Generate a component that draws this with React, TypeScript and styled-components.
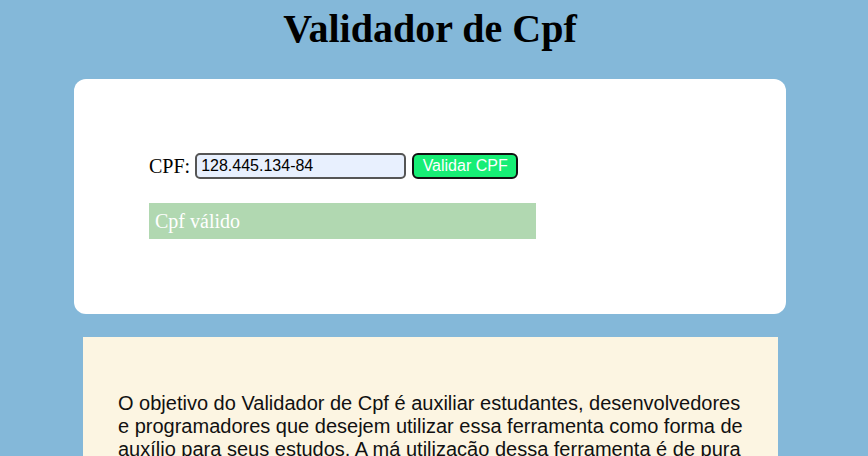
import React from "react";
import styled, { createGlobalStyle } from "styled-components";

const Global = createGlobalStyle`
  html, body { margin: 0; padding: 0; }
  body {
    background: #84b8d9;
    font-family: "Liberation Serif", "Times New Roman", serif;
    padding: 0 16px 0 8px;
  }
`;

const Title = styled.h1`
  margin: 5px 0 27px;
  text-align: center;
  font-size: 40px;
  font-weight: bold;
  color: #000;
`;

const Card = styled.section`
  margin: 0 66px;
  background: #fff;
  border-radius: 12px;
  padding: 74px 75px 75px;
  display: flex;
  flex-direction: column;
  gap: 24px;
`;

const Row = styled.form`
  display: flex;
  align-items: center;
  height: 26px;
  margin: 0;
`;

const Label = styled.label`
  font-size: 20px;
  margin-right: 5px;
`;

const Input = styled.input`
  box-sizing: border-box;
  width: 211px;
  height: 26px;
  border: 2px solid #555;
  border-radius: 5px;
  background: #e8f0fe;
  font-family: "Liberation Sans", Arial, sans-serif;
  font-size: 16px;
  padding: 0 4px;
  color: #000;
  outline: none;
`;

const Button = styled.button`
  box-sizing: border-box;
  margin-left: 6px;
  width: 106px;
  height: 26px;
  border: 2px solid #111;
  border-radius: 6px;
  background: #17ee75;
  color: #fff;
  font-family: "Liberation Sans", Arial, sans-serif;
  font-size: 16px;
  padding: 0;
  cursor: pointer;
`;

const Result = styled.div<{ $ok: boolean }>`
  box-sizing: border-box;
  width: 387px;
  height: 36px;
  background: ${(p) => (p.$ok ? "#b1d8b1" : "#e8b0b0")};
  color: #fff;
  font-size: 20px;
  padding-left: 6px;
  display: flex;
  align-items: center;
`;

const About = styled.section`
  margin: 23px 74px 0 75px;
  background: #fcf5e2;
  padding: 35px 28px 35px 35px;
  font-family: "Liberation Sans", Arial, sans-serif;
  font-size: 20px;
  color: #111;
`;

const Para = styled.p`
  margin: 20px 0;
`;

export default function App() {
  return (
    <>
      <Global />
      <Title>Validador de Cpf</Title>
      <Card>
        <Row onSubmit={(e) => e.preventDefault()}>
          <Label htmlFor="cpf">CPF:</Label>
          <Input id="cpf" defaultValue="128.445.134-84" />
          <Button type="submit">Validar CPF</Button>
        </Row>
        <Result $ok>Cpf válido</Result>
      </Card>
      <About>
        <Para>
          O objetivo do Validador de Cpf é auxiliar estudantes, desenvolvedores
          e programadores que desejem utilizar essa ferramenta como forma de
          auxílio para seus estudos. A má utilização dessa ferramenta é de pura
          responsabilidade do usuário.
        </Para>
      </About>
    </>
  );
}
